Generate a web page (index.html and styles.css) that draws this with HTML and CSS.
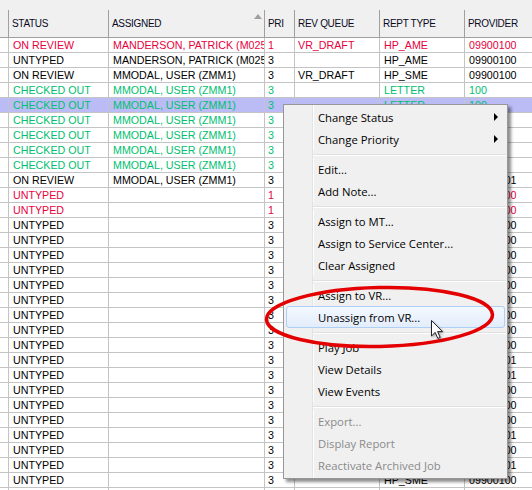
FILE: index.html
```html
<!DOCTYPE html>
<html lang="en">
<head>
    <meta charset="UTF-8">
    <title>Jobs</title>
    <link rel="stylesheet" href="styles.css">
</head>
<body>
    <div class="topband"></div>
    <div id="grid" class="grid">
        <div class="row head">
            <div></div>
            <div>STATUS</div>
            <div class="sorted">ASSIGNED<span class="sort-arrow"></span></div>
            <div>PRI</div>
            <div>REV QUEUE</div>
            <div>REPT TYPE</div>
            <div>PROVIDER</div>
        </div>
    </div>

    <div class="menu">
        <div class="item">Change Status<span class="arrow"></span></div>
        <div class="item">Change Priority<span class="arrow"></span></div>
        <div class="sep"></div>
        <div class="item">Edit...</div>
        <div class="item">Add Note...</div>
        <div class="sep"></div>
        <div class="item">Assign to MT...</div>
        <div class="item">Assign to Service Center...</div>
        <div class="item">Clear Assigned</div>
        <div class="sep"></div>
        <div class="item">Assign to VR...</div>
        <div class="item hover">Unassign from VR...</div>
        <div class="sep"></div>
        <div class="item">Play Job</div>
        <div class="item">View Details</div>
        <div class="item">View Events</div>
        <div class="sep"></div>
        <div class="item disabled">Export...</div>
        <div class="item disabled">Display Report</div>
        <div class="item disabled">Reactivate Archived Job</div>
    </div>

    <svg class="mark" width="532" height="490" viewBox="0 0 532 490">
        <ellipse cx="379.5" cy="317" rx="113" ry="29.5" fill="none" stroke="#e40000" stroke-width="3.5" transform="rotate(-1.2 379.5 317)"/>
    </svg>

    <svg class="cursor" width="14" height="21" viewBox="0 0 14 21">
        <path d="M0.5 0.5 L0.5 16 L4.2 12.4 L6.8 18.4 L9.2 17.4 L6.6 11.6 L11.5 11.6 Z" fill="#fff" stroke="#222" stroke-width="1" stroke-linejoin="round"/>
    </svg>

    <script>
        const grid = document.getElementById('grid');
        const CHECKED = ['green', 'CHECKED OUT', 'MMODAL, USER (ZMM1)', '3', '', 'LETTER', '100'];
        const rows = [
            ['red', 'ON REVIEW', 'MANDERSON, PATRICK (M025)', '1', 'VR_DRAFT', 'HP_AME', '09900100'],
            ['', 'UNTYPED', 'MANDERSON, PATRICK (M025)', '3', '', 'HP_AME', '09900100'],
            ['', 'ON REVIEW', 'MMODAL, USER (ZMM1)', '3', 'VR_DRAFT', 'HP_SME', '09900100'],
            CHECKED,
            ['green selected'].concat(CHECKED.slice(1)),
            CHECKED, CHECKED, CHECKED, CHECKED,
            ['', 'ON REVIEW', 'MMODAL, USER (ZMM1)', '3', '', 'HP_SME', '09900101'],
            ['red', 'UNTYPED', '', '1', '', 'HP_AME', '09900100'],
            ['red', 'UNTYPED', '', '1', '', 'HP_AME', '09900100']
        ];
        // last digit of the provider codes still visible past the menu
        '000000000110001010'.split('').forEach(d => {
            rows.push(['', 'UNTYPED', '', '3', '', 'HP_SME', '0990010' + d]);
        });
        rows.push(['', '', '', '', '', '', '']);

        rows.forEach(r => {
            const row = document.createElement('div');
            row.className = ('row ' + r[0]).trim();
            row.appendChild(document.createElement('div'));
            r.slice(1).forEach(text => {
                const cell = document.createElement('div');
                cell.textContent = text;
                row.appendChild(cell);
            });
            grid.appendChild(row);
        });
    </script>
</body>
</html>
```

FILE: styles.css
```css
body { margin: 0; width: 532px; height: 490px; overflow: hidden; position: relative; background: #fff; font-family: "Liberation Sans", Arial, sans-serif; color: #000; }
.topband { height: 10px; background: #f0f0f0; }
.row { display: grid; grid-template-columns: 9px 100px 156px 30px 85px 85px 1fr; height: 15px; }
.row > div { box-sizing: border-box; border-right: 1px solid #c4c4c4; border-bottom: 1px solid #c4c4c4; padding-left: 4px; font-size: 10.7px; line-height: 14px; white-space: nowrap; overflow: hidden; }
.row > div:last-child { border-right: none; }
.row > div:nth-child(4), .row > div:nth-child(5) { padding-left: 3px; }
.row.red { color: #e8003d; }
.row.green { color: #00c070; }
.row.selected { background: #bbbbf5; }
.row.head { height: 28px; background: #f0f0f0; }
.row.head > div { border-color: #a0a0a0; padding-left: 3px; font-size: 10px; letter-spacing: -0.3px; line-height: 27px; color: #0a0a1e; }
.row.head > div.sorted { display: flex; }
.sort-arrow { margin-left: auto; margin-right: 2px; margin-top: 4px; width: 0; height: 0; border-left: 4.5px solid transparent; border-right: 4.5px solid transparent; border-bottom: 5px solid #a0a0a0; }

.menu { position: absolute; left: 283px; top: 104px; width: 225px; box-sizing: border-box; border: 1px solid #979797; padding: 1px 0 2px; background: linear-gradient(to right, #f0f0f0 28px, #e2e3e3 28px, #e2e3e3 29px, #fff 29px, #fff 30px, #f0f0f0 30px); box-shadow: 3px 3px 3px rgba(0,0,0,0.45); font-family: "Open Sans", "Noto Sans", sans-serif; font-size: 11.3px; }
.item { display: flex; align-items: center; height: 22px; padding-left: 34px; white-space: nowrap; }
.item.disabled { color: #8a8a8a; }
.item.hover { box-sizing: border-box; margin: 0 2px; padding-left: 31px; border: 1px solid #aecff7; border-radius: 3px; background: linear-gradient(#f3f8fe, #e3edfb); }
.arrow { margin-left: auto; margin-right: 9px; width: 0; height: 0; border-left: 4px solid #000; border-top: 4px solid transparent; border-bottom: 4px solid transparent; }
.sep { height: 8px; margin-left: 29px; margin-right: 1px; background: linear-gradient(#f0f0f0 4px, #e0e0e0 4px, #e0e0e0 5px, #fff 5px, #fff 6px, #f0f0f0 6px); }

.mark { position: absolute; left: 0; top: 0; pointer-events: none; }
.cursor { position: absolute; left: 431px; top: 320px; pointer-events: none; filter: drop-shadow(1px 1px 1px rgba(0,0,0,0.35)); }
```
